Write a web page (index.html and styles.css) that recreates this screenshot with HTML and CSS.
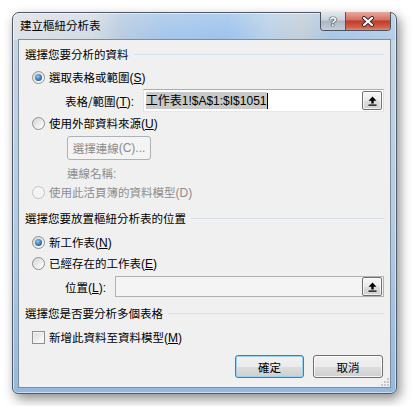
FILE: index.html
```html
<!DOCTYPE html>
<html lang="zh-Hant">
<head>
  <meta charset="UTF-8">
  <title>建立樞紐分析表</title>
  <link rel="stylesheet" href="styles.css">
</head>
<body>

  <div class="window">
    <div class="titlebar">
      <span class="title">建立樞紐分析表</span>
      <div class="caption-btns">
        <div class="cap-btn cap-help">?</div>
        <div class="cap-btn cap-close">
          <svg width="14" height="11" viewBox="0 0 14 11">
            <path d="M3 2 L11 9 M11 2 L3 9" stroke="#3a2424" stroke-width="4" stroke-linecap="round" fill="none"/>
            <path d="M3 2 L11 9 M11 2 L3 9" stroke="#fff" stroke-width="2.2" stroke-linecap="round" fill="none"/>
          </svg>
        </div>
      </div>
    </div>

    <div class="client">
      <!-- 資料來源 -->
      <div class="group-head gap-h1">選擇您要分析的資料</div>
      <div class="opt gap-r1"><span class="radio checked"></span><span>選取表格或範圍<span class="key">(<u>S</u>)</span></span></div>
      <div class="field-row gap-range">
        <span class="field-label">表格/範圍<span class="key">(<u>T</u>):</span></span>
        <div class="textbox">
          <span class="sel">工作表1<span class="key">!$A$1:$I$1051</span></span><span class="caret"></span>
          <span class="pick">
            <svg width="9" height="10" viewBox="0 0 9 10"><path d="M4.5 0.5 L8.5 4.8 L0.5 4.8 Z M3.3 4.5 H5.7 V7.5 H3.3 Z M0.5 8.6 H8.5 V9.8 H0.5 Z" fill="#000"/></svg>
          </span>
        </div>
      </div>
      <div class="opt gap-r2"><span class="radio"></span><span>使用外部資料來源<span class="key">(<u>U</u>)</span></span></div>
      <div class="conn-btn gap-btn">選擇連線<span class="key">(C)...</span></div>
      <div class="note gap-note">連線名稱<span class="key">:</span></div>
      <div class="opt disabled gap-r3"><span class="radio"></span><span>使用此活頁簿的資料模型<span class="key">(D)</span></span></div>

      <!-- 放置位置 -->
      <div class="group-head gap-h2">選擇您要放置樞紐分析表的位置</div>
      <div class="opt gap-r4"><span class="radio checked"></span><span>新工作表<span class="key">(<u>N</u>)</span></span></div>
      <div class="opt gap-r5"><span class="radio"></span><span>已經存在的工作表<span class="key">(<u>E</u>)</span></span></div>
      <div class="field-row gap-loc">
        <span class="field-label short">位置<span class="key">(<u>L</u>):</span></span>
        <div class="textbox off">
          <span class="pick">
            <svg width="9" height="10" viewBox="0 0 9 10"><path d="M4.5 0.5 L8.5 4.8 L0.5 4.8 Z M3.3 4.5 H5.7 V7.5 H3.3 Z M0.5 8.6 H8.5 V9.8 H0.5 Z" fill="#000"/></svg>
          </span>
        </div>
      </div>

      <!-- 多個表格 -->
      <div class="group-head gap-h3">選擇您是否要分析多個表格</div>
      <div class="opt gap-cb"><span class="check"></span><span>新增此資料至資料模型<span class="key">(<u>M</u>)</span></span></div>

      <div class="actions">
        <div class="btn default">確定</div>
        <div class="btn">取消</div>
      </div>

      <svg class="grip" width="10" height="10" viewBox="0 0 10 10">
        <g fill="#c4c8cc">
          <rect x="8" y="2" width="2" height="2"/><rect x="5" y="5" width="2" height="2"/><rect x="8" y="5" width="2" height="2"/>
          <rect x="2" y="8" width="2" height="2"/><rect x="5" y="8" width="2" height="2"/><rect x="8" y="8" width="2" height="2"/>
        </g>
      </svg>
    </div>
  </div>

</body>
</html>
```

FILE: styles.css
```css
* {
  box-sizing: border-box;
}
body {
  margin: 0;
  padding: 12px;
  background: #fff;
  font-family: "Noto Sans CJK TC", sans-serif;
  font-size: 11.5px;
  color: #000;
}
.key {
  font-family: "Liberation Sans", sans-serif;
  font-size: 12px;
}
u {
  text-decoration-thickness: 1px;
  text-underline-offset: 1px;
}
.window {
  width: 385px;
  height: 382px;
  display: flex;
  flex-direction: column;
  padding: 0 5px 5px;
  border: 1px solid #4f5a66;
  border-radius: 7px 7px 6px 6px;
  background:
    linear-gradient(rgba(255,255,255,0.18), rgba(255,255,255,0) 26px) no-repeat,
    linear-gradient(90deg, #dce1e7 0, #d3dbe4 80px, #b7cbe1 110px, #a5c6ea 150px, #9ec3ec 215px, #b9d1e9 255px, #c4ced8 288px, #a8c7e8 320px, #b5cde6 383px) no-repeat 0 0 / 100% 27px,
    linear-gradient(#c9d5e2, #b3cbe4 55%, #93b9df);
  box-shadow: inset 0 0 0 1px rgba(255,255,255,0.55), 3px 5px 12px rgba(0,0,0,0.45);
}
.titlebar {
  height: 26px;
  display: flex;
  justify-content: space-between;
  align-items: flex-start;
}
.title {
  padding: 5px 0 0 2px;
  line-height: 14px;
}
.caption-btns {
  display: flex;
  height: 19px;
  margin-top: -1px;
  border: 1px solid #4a5461;
  border-top: none;
  border-radius: 0 0 4px 4px;
  overflow: hidden;
}
.cap-btn {
  height: 100%;
  display: flex;
  align-items: center;
  justify-content: center;
}
.cap-help {
  width: 25px;
  border-right: 1px solid #4a5461;
  background: linear-gradient(#e3e8ee, #c9d2dc 45%, #aab6c3 50%, #c3ced9);
  color: #fff;
  font-family: "Liberation Sans", sans-serif;
  font-weight: bold;
  font-size: 13px;
  text-shadow: 0 0 1px #222, 0 0 1px #222, 0 0 1px #222;
}
.cap-close {
  width: 44px;
  background: linear-gradient(#e9a99d, #d46c5e 45%, #c13a2a 50%, #d0604d 85%, #e08a74);
}
.client {
  flex: 1;
  position: relative;
  background: #f0f0f0;
  border: 1px solid #7f8e9d;
  padding: 0 6px;
}
.group-head {
  display: flex;
  align-items: center;
  height: 14px;
  line-height: 14px;
}
.group-head::after {
  content: "";
  flex: 1;
  height: 1px;
  margin-left: 5px;
  background: #d7e0e9;
}
.opt {
  display: flex;
  align-items: center;
  gap: 4px;
  height: 14px;
  padding-left: 7px;
  line-height: 14px;
}
.opt.disabled {
  color: #8d8d8d;
}
.radio {
  width: 13px;
  height: 13px;
  display: flex;
  align-items: center;
  justify-content: center;
  border: 1px solid #8e8f8f;
  border-radius: 50%;
  background: linear-gradient(135deg, #d3d3d3, #f9f9f9 80%);
}
.radio.checked::after {
  content: "";
  width: 7px;
  height: 7px;
  border-radius: 50%;
  background: radial-gradient(circle at 40% 35%, #8fcaf2, #2a6aa4 65%, #1a4c7d);
}
.disabled .radio {
  border-color: #c4c4c4;
  background: #f4f4f4;
}
.check {
  width: 13px;
  height: 13px;
  border: 1px solid #8e8f8f;
  background: linear-gradient(135deg, #dadada, #fafafa 85%);
  box-shadow: inset 0 0 0 1px #f4f4f4;
}
.field-row {
  display: flex;
  align-items: center;
  padding-left: 40px;
}
.field-label {
  width: 78px;
}
.field-label.short {
  width: 50px;
}
.textbox {
  width: 242px;
  height: 23px;
  display: flex;
  align-items: center;
  padding: 0 1px 0 2px;
  background: #fff;
  border: 1px solid;
  border-color: #abadb3 #dbdfe6 #e3e9ef #e2e3ea;
}
.textbox.off {
  width: 269px;
  height: 21px;
  background: #f4f4f4;
  border-color: #adb2b5;
}
.sel {
  font-size: 12px;
  line-height: 16px;
  background: #c9c9c9;
}
.caret {
  width: 1px;
  height: 16px;
  background: #000;
}
.pick {
  width: 20px;
  height: 19px;
  margin-left: auto;
  display: flex;
  align-items: center;
  justify-content: center;
  border: 1px solid #707070;
  border-radius: 2px;
  background: linear-gradient(#f6f6f6, #ebebeb 50%, #dddddd 51%, #d0d0d0);
  box-shadow: inset 0 0 0 1px rgba(255,255,255,0.7);
}
.conn-btn {
  width: 84px;
  height: 24px;
  margin-left: 42px;
  display: flex;
  align-items: center;
  justify-content: center;
  color: #8b8b8b;
  border: 1px solid #adb2b5;
  border-radius: 3px;
  background: #f4f4f4;
}
.note {
  height: 14px;
  line-height: 14px;
  padding-left: 42px;
  color: #8d8d8d;
}
.actions {
  display: flex;
  justify-content: flex-end;
  gap: 9px;
  margin-top: 11px;
  padding-right: 1px;
}
.btn {
  width: 70px;
  height: 23px;
  display: flex;
  align-items: center;
  justify-content: center;
  border: 1px solid #707070;
  border-radius: 3px;
  background: linear-gradient(#f2f2f2, #ebebeb 50%, #dddddd 51%, #cfcfcf);
  box-shadow: inset 0 0 0 1px rgba(255,255,255,0.75);
}
.btn.default {
  width: 69px;
  border-color: #3c7fb1;
  box-shadow: inset 0 0 0 1px #9bd3f3;
}
.grip {
  position: absolute;
  right: 1px;
  bottom: 1px;
}

.gap-h1 { margin-top: 7px; }
.gap-r1 { margin-top: 9px; }
.gap-range { margin-top: 5px; }
.gap-r2 { margin-top: 4px; }
.gap-btn { margin-top: 6px; }
.gap-note { margin-top: 6px; }
.gap-r3 { margin-top: 5px; }
.gap-h2 { margin-top: 12px; }
.gap-r4 { margin-top: 10px; }
.gap-r5 { margin-top: 7px; }
.gap-loc { margin-top: 6px; }
.gap-h3 { margin-top: 9px; }
.gap-cb { margin-top: 10px; }
```
